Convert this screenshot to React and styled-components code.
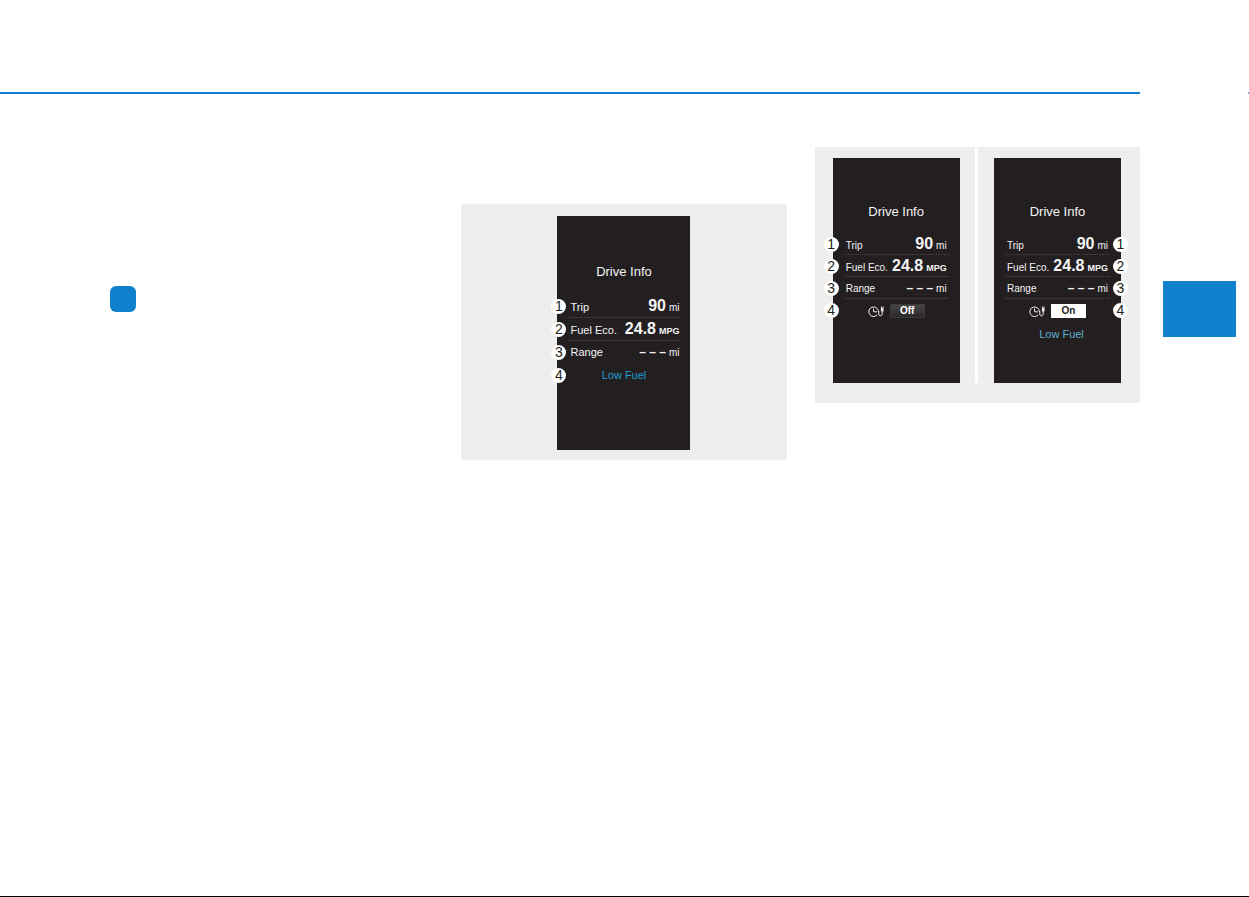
import React from "react";
import styled, { createGlobalStyle, css } from "styled-components";

const GlobalStyle = createGlobalStyle`
  *, *::before, *::after { box-sizing: border-box; }
  body {
    margin: 0;
    background: #fff;
    font-family: "Liberation Sans", Arial, sans-serif;
  }
`;

const Page = styled.div`
  display: flex;
  flex-direction: column;
  min-height: 100vh;
  padding-top: 92px;
  border-bottom: 1px solid #000;
`;

const Header = styled.header`
  display: flex;
  gap: 108px;
`;

const Rule = styled.div`
  flex: 1;
  height: 2px;
  background: #0f7fcd;
`;

const RuleEnd = styled.div`
  width: 1px;
  height: 2px;
  background: #5aaadf;
`;

const Content = styled.main`
  display: flex;
  gap: 23px;
  padding: 0 13px 0 108px;
`;

const Columns = styled.div`
  flex: 1;
  display: grid;
  grid-template-columns: repeat(3, 1fr);
  gap: 28px;
  align-items: start;
`;

const Column = styled.section`
  padding-top: ${(p) => p.$top}px;
`;

const Marker = styled.div`
  width: 26px;
  height: 26px;
  margin-left: 2px;
  border-radius: 6px;
  background: #1180cd;
`;

const ChapterTab = styled.aside`
  width: 73px;
  height: 56px;
  margin-top: 187px;
  background: #1180cd;
`;

const Figure = styled.figure`
  display: flex;
  justify-content: center;
  margin: 0;
  padding: ${(p) => (p.$split ? "0 19px 20px 18px" : "12px 0 10px")};
  background: #eee;
  ${(p) => p.$split && css`justify-content: space-between;`}
`;

const Divider = styled.div`
  width: 3px;
  margin-top: 1px;
  background: #fff;
`;

const Screen = styled.div`
  width: ${(p) => (p.$large ? 133 : 127)}px;
  height: ${(p) => (p.$large ? 234 : 225)}px;
  margin-top: ${(p) => (p.$large ? 0 : 11)}px;
  padding-top: ${(p) => (p.$large ? 48 : 46)}px;
  background: #231f20;
  color: #f4f4f4;
`;

const Title = styled.h2`
  margin: 0 0 ${(p) => (p.$large ? 15 : 13)}px;
  font-size: 13px;
  font-weight: 400;
  line-height: 16px;
  text-align: center;
`;

const Items = styled.ol`
  margin: 0;
  padding: 0;
  list-style: none;
`;

const Item = styled.li`
  position: relative;
  height: ${(p) => (p.$large ? 23 : 22)}px;
  padding: 0 11px;
`;

const Badge = styled.span`
  position: absolute;
  top: 4px;
  ${(p) => (p.$side === "right" ? "right: -7px" : `left: ${p.$large ? -6 : -9}px`)};
  width: 15px;
  height: 15px;
  border-radius: 50%;
  background: #fff;
  color: #231f20;
  font-size: 14px;
  line-height: 15px;
  text-align: center;
`;

const Line = styled.div`
  display: flex;
  align-items: baseline;
  height: 100%;
  padding: 0 ${(p) => (p.$large ? 0 : 2)}px 0 2px;
  border-bottom: 1px ${(p) => (p.$ruled ? "dotted #4d494a" : "solid transparent")};
  line-height: 22px;
`;

const Label = styled.span`
  flex: 1;
  font-size: ${(p) => (p.$large ? 11 : 10)}px;
  white-space: nowrap;
`;

const Value = styled.span`
  font-size: ${(p) => (p.$empty ? 12 : 16)}px;
  font-weight: 700;
  white-space: nowrap;
`;

const Unit = styled.span`
  margin-left: 3px;
  font-size: ${(p) => (p.$strong ? 9 : 10)}px;
  font-weight: ${(p) => (p.$strong ? 700 : 400)};
`;

const TimerLine = styled.div`
  display: flex;
  align-items: center;
  justify-content: center;
  gap: 5px;
  height: 100%;
  padding-top: 2px;
`;

const Toggle = styled.button`
  width: 35px;
  height: 14px;
  padding: 0;
  border: ${(p) => (p.$on ? "0" : "1px solid #3c393b")};
  background: ${(p) => (p.$on ? "#fff" : "linear-gradient(#484547, #2c292a)")};
  color: ${(p) => (p.$on ? "#231f20" : "#fff")};
  font-family: inherit;
  font-size: 10px;
  font-weight: 700;
  line-height: 12px;
`;

const Warning = styled.p`
  margin: 0;
  padding-left: ${(p) => (p.$large ? 0 : 8)}px;
  color: ${(p) => (p.$large ? "#1d9fd8" : "#5cb2d0")};
  font-size: 11px;
  line-height: ${(p) => (p.$large ? 22 : 26)}px;
  text-align: center;
`;

const TimerIcon = () => (
  <svg width="17" height="13" viewBox="0 0 17 13" fill="none" stroke="#eee" aria-hidden="true">
    <path d="M9.3 9.8A4.8 4.8 0 1 1 10.4 6.8" />
    <path d="M5.6 3.5V6.8H9" />
    <path d="M10.8 6V9.2C10.8 11.4 14.2 11.6 14.2 8.8V6" />
    <path d="M14.2 2.8V6.4" strokeWidth="2.6" />
    <path d="M13.4 1.4V3M15.2 1.4V3" strokeWidth="0.8" />
  </svg>
);

const readings = [
  { label: "Trip", value: "90", unit: "mi" },
  { label: "Fuel Eco.", value: "24.8", unit: "MPG" },
  { label: "Range", value: "– – –", unit: "mi", empty: true },
];

function DriveInfo({ large, side = "left", timer, lowFuel }) {
  const lastRuled = timer ? 3 : 2;
  return (
    <Screen $large={large}>
      <Title $large={large}>Drive Info</Title>
      <Items>
        {readings.map((r, i) => (
          <Item key={r.label} $large={large}>
            <Badge $side={side} $large={large}>{i + 1}</Badge>
            <Line $large={large} $ruled={i < lastRuled}>
              <Label $large={large}>{r.label}</Label>
              <Value $empty={r.empty}>{r.value}</Value>
              <Unit $strong={r.unit === "MPG"}>{r.unit}</Unit>
            </Line>
          </Item>
        ))}
        <Item $large={large}>
          <Badge $side={side} $large={large}>4</Badge>
          {timer ? (
            <TimerLine>
              <TimerIcon />
              <Toggle type="button" $on={timer === "On"} aria-pressed={timer === "On"}>
                {timer}
              </Toggle>
            </TimerLine>
          ) : (
            <Warning $large={large}>Low Fuel</Warning>
          )}
        </Item>
      </Items>
      {timer && lowFuel && <Warning>Low Fuel</Warning>}
    </Screen>
  );
}

export default function App() {
  return (
    <>
      <GlobalStyle />
      <Page>
        <Header>
          <Rule />
          <RuleEnd />
        </Header>
        <Content>
          <Columns>
            <Column $top={192}>
              <Marker />
            </Column>
            <Column $top={110}>
              <Figure>
                <DriveInfo large lowFuel />
              </Figure>
            </Column>
            <Column $top={53}>
              <Figure $split>
                <DriveInfo timer="Off" />
                <Divider />
                <DriveInfo timer="On" side="right" lowFuel />
              </Figure>
            </Column>
          </Columns>
          <ChapterTab />
        </Content>
      </Page>
    </>
  );
}
